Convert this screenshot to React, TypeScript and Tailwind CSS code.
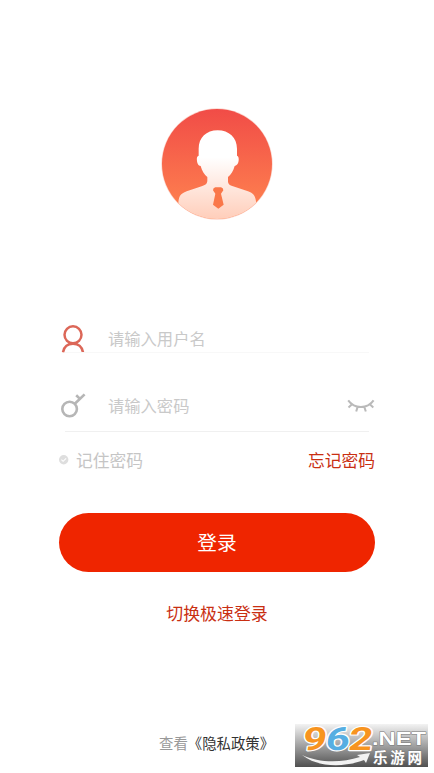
import { useState } from 'react';

function Avatar() {
  return (
    <svg viewBox="0 0 336 336" className="h-[112px] w-[112px]" aria-hidden="true">
      <defs>
        <linearGradient id="avatarBg" x1="0" y1="0" x2="0" y2="1">
          <stop offset="0" stopColor="#f14c47" />
          <stop offset="1" stopColor="#ff8650" />
        </linearGradient>
        <linearGradient id="avatarBody" x1="0" y1="0" x2="0" y2="1">
          <stop offset="0" stopColor="#ffffff" />
          <stop offset="0.3" stopColor="#ffffff" />
          <stop offset="1" stopColor="#ffcdb9" />
        </linearGradient>
        <clipPath id="avatarClip">
          <circle cx="168" cy="168" r="165" />
        </clipPath>
      </defs>
      <circle cx="168" cy="168" r="167" fill="#fbd5cd" />
      <circle cx="168" cy="168" r="165" fill="url(#avatarBg)" />
      <g clipPath="url(#avatarClip)">
        <path
          d="M170 67C136 67 113 89 113 122V143C106 145 107 156 109 164C111 171 115 173 119 174C123 190 130 199 139 207V217C139 228 133 231 122 235L77 250C58 257 53 265 52 287L48 336H290L286 287C284 265 279 257 261 250L216 235C205 231 200 227 201 217V207C210 199 217 190 221 174C226 173 230 170 232 163C234 155 234 145 228 143V122C228 89 204 67 170 67Z"
          fill="url(#avatarBody)"
        />
        <path
          d="M163 238H180Q187 240 187 247L180 257L188 290L172 302L156 290L163 257L156 247Q156 240 163 238Z"
          fill="#fa7749"
        />
      </g>
    </svg>
  );
}

function UserIcon() {
  return (
    <svg viewBox="0 0 24 28" className="h-7 w-6" fill="none" stroke="#dc6758" strokeWidth="2.5">
      <circle cx="12" cy="9.8" r="8.5" />
      <path d="M2 27.3C3 21.8 7 18.8 12 18.8C17 18.8 21 21.8 22 27.3" />
    </svg>
  );
}

function KeyIcon() {
  return (
    <svg viewBox="0 0 26 26" className="h-[26px] w-[26px]" fill="none" stroke="#b6b6b6" strokeWidth="2.6">
      <circle cx="8.6" cy="16" r="7.3" />
      <path d="M13.8 10.8L23.6 1.4M15.2 2.2L19 5.9" />
    </svg>
  );
}

function ClosedEyeIcon() {
  return (
    <svg viewBox="0 0 28 14" className="h-3.5 w-7" fill="none" stroke="#bababa" strokeWidth="2">
      <path d="M1.2 1.3C7.6 10.2 20.2 10.2 26.6 1.3M5 5.2L1.5 8.4M10.6 7.9L9.2 12.5M17.3 7.9L18.8 12.5M22.8 5.2L26.3 8.4" />
    </svg>
  );
}

function SiteBadge() {
  return (
    <svg
      viewBox="0 0 133 43"
      className="absolute left-[295px] top-[724px] h-[43px] w-[133px] overflow-visible font-['Noto_Sans_CJK_SC',sans-serif]"
    >
      <defs>
        <linearGradient id="badgeBg" x1="0" y1="0" x2="0" y2="1">
          <stop offset="0" stopColor="#f3f3f3" />
          <stop offset="0.5" stopColor="#a2a2a2" />
          <stop offset="1" stopColor="#505050" />
        </linearGradient>
      </defs>
      <rect width="133" height="43" fill="url(#badgeBg)" />
      <g
        className="font-['Roboto',sans-serif]"
        transform="translate(0 26) skewX(-8)"
        fontSize="32"
        fontWeight="700"
        stroke="#fff"
        strokeWidth="2.4"
        strokeLinejoin="round"
        paintOrder="stroke"
      >
        <text x="6.5" y="0" textLength="24" lengthAdjust="spacingAndGlyphs" fill="#f7941f">9</text>
        <text x="29.5" y="0" textLength="24" lengthAdjust="spacingAndGlyphs" fill="#56aee2">6</text>
        <text x="52.5" y="0" textLength="24" lengthAdjust="spacingAndGlyphs" fill="#f7941f">2</text>
      </g>
      <g fill="#fff" fontWeight="700" stroke="#777" strokeWidth="0.8" paintOrder="stroke">
        <text
          x="77"
          y="21"
          fontSize="18"
          textLength="54"
          lengthAdjust="spacingAndGlyphs"
          className="font-['Liberation_Sans',sans-serif]"
        >
          .NET
        </text>
        <text x="78" y="38.5" fontSize="14.5" textLength="49" lengthAdjust="spacing">乐游网</text>
      </g>
      <path d="M7 31C24 39 46 39 65 33L62 31L75 29L71 39L69 36C48 44 22 43 7 31Z" fill="#f2f2f2" />
    </svg>
  );
}

export default function App() {
  const [username, setUsername] = useState('');
  const [password, setPassword] = useState('');
  const [remember, setRemember] = useState(false);

  return (
    <main className="relative flex h-[773px] w-[434px] flex-col overflow-hidden bg-white font-['Noto_Sans_CJK_SC',sans-serif]">
      <div className="flex justify-center pt-[108px]">
        <Avatar />
      </div>

      <form className="mt-[104px] flex flex-col pl-[59px] pr-[59px]" onSubmit={(e) => e.preventDefault()}>
        <div className="flex h-[29px] items-center pl-0.5">
          <UserIcon />
          <input
            value={username}
            onChange={(e) => setUsername(e.target.value)}
            placeholder="请输入用户名"
            className="ml-[23px] h-7 w-56 pb-0.5 text-[16.3px] outline-none placeholder:text-[#c9c9c9]"
          />
        </div>
        <div className="ml-1.5 mr-1.5 -mt-px h-px bg-[#f8f8f8]" />

        <div className="mt-[38px] flex h-[30px] items-center pl-0.5">
          <KeyIcon />
          <input
            type="password"
            value={password}
            onChange={(e) => setPassword(e.target.value)}
            placeholder="请输入密码"
            className="ml-[21px] h-7 w-56 pb-[3px] text-[16.3px] outline-none placeholder:text-[#c9c9c9]"
          />
          <button type="button" className="ml-auto">
            <ClosedEyeIcon />
          </button>
        </div>
        <div className="ml-1.5 mr-1.5 mt-[10px] h-px bg-[#f0f0f0]" />

        <div className="mt-[14px] flex h-7 items-center justify-between text-[16.75px] leading-7">
          <button type="button" className="flex items-center text-[#c5c5c5]" onClick={() => setRemember(!remember)}>
            <svg viewBox="0 0 10 10" className="mr-[7px] h-2.5 w-2.5">
              <circle cx="4.7" cy="4.7" r="4.7" fill={remember ? '#ef2500' : '#dedede'} />
              <path d="M2.4 4.7L4.1 6.3L7.1 3.4" fill="none" stroke="#fff" strokeWidth="1.1" />
            </svg>
            记住密码
          </button>
          <button type="button" className="text-[#c92f12]">忘记密码</button>
        </div>

        <button type="submit" className="mt-[39px] h-[59px] rounded-full bg-[#ef2500] pb-0.5 text-[19.7px] text-white">
          登录
        </button>
      </form>

      <button type="button" className="mx-auto mt-[27px] text-[16.9px] leading-7 text-[#c92f12]">
        切换极速登录
      </button>

      <footer className="mt-[106px] flex pl-[159px] text-[14.4px] leading-5 text-[#333]">
        <span className="text-[#999]">查看</span>
        <span>《隐私政策》</span>
      </footer>

      <SiteBadge />
    </main>
  );
}
